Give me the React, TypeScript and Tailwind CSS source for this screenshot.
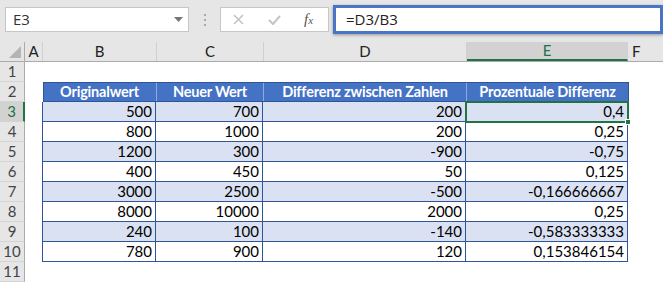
import React from 'react';

const cols = [
  { key: 'A', w: 'w-[18px]' },
  { key: 'B', w: 'w-[114px]' },
  { key: 'C', w: 'w-[107px]' },
  { key: 'D', w: 'w-[203px]' },
  { key: 'E', w: 'w-[161px]' },
];

const data: [string, string, string, string][] = [
  ['500', '700', '200', '0,4'],
  ['800', '1000', '200', '0,25'],
  ['1200', '300', '-900', '-0,75'],
  ['400', '450', '50', '0,125'],
  ['3000', '2500', '-500', '-0,166666667'],
  ['8000', '10000', '2000', '0,25'],
  ['240', '100', '-140', '-0,583333333'],
  ['780', '900', '120', '0,153846154'],
];

const headers = ['Originalwert', 'Neuer Wert', 'Differenz zwischen Zahlen', 'Prozentuale Differenz'];
const widths = ['w-[114px]', 'w-[107px]', 'w-[203px]', 'w-[161px]'];

const RowHead: React.FC<{ n: number; active?: boolean }> = ({ n, active }) => (
  <div
    className={`w-[25px] h-[20px] shrink-0 flex items-center justify-center text-[15px] border-b border-[#d4d4d4] ${
      active ? 'bg-[#d2d2d2] text-[#217346] border-r-2 border-r-[#217346]' : 'bg-[#e6e6e6] text-[#444] border-r border-r-[#ababab]'
    }`}
  >
    {n}
  </div>
);

export default function App() {
  return (
    <div className="w-[663px] h-[283px] overflow-hidden bg-white font-['Lato',sans-serif] text-[15px] text-black">
      {/* formula bar */}
      <div className="h-[42px] bg-[#e6e6e6] flex items-start">
        <div className="ml-[5px] mt-[7px] w-[184px] h-[25px] bg-white border border-[#c6c6c6] flex items-center justify-between pl-[7px] pr-[5px]">
          <span className="text-[15px] text-[#333] font-['Open_Sans',sans-serif]">E3</span>
          <svg width="9" height="5" viewBox="0 0 9 5"><path d="M0 0h9L4.5 5z" fill="#777" /></svg>
        </div>
        <div className="w-[31px] h-[42px] flex flex-col items-center justify-center gap-[3px] pb-[2px]">
          <span className="w-[2px] h-[2px] bg-[#aaa]" />
          <span className="w-[2px] h-[2px] bg-[#aaa]" />
          <span className="w-[2px] h-[2px] bg-[#aaa]" />
        </div>
        <div className="mt-[7px] w-[109px] h-[25px] bg-white border border-[#c6c6c6] flex items-center">
          <svg className="ml-[12px]" width="11" height="11" viewBox="0 0 11 11"><path d="M1 1l9 9M10 1l-9 9" stroke="#c4c4c4" strokeWidth="1.6" /></svg>
          <svg className="ml-[24px]" width="13" height="10" viewBox="0 0 13 10"><path d="M1 5l4 4 7-8" stroke="#c4c4c4" strokeWidth="2" fill="none" /></svg>
          <span className="ml-[23px] font-['Liberation_Serif',serif] italic text-[15px] text-[#555] leading-none">
            f<span className="text-[11px]">x</span>
          </span>
        </div>
        <div className="ml-[4px] mt-[5px] w-[330px] h-[29px] bg-white border-[3px] border-[#4a74c4] shadow-[0_1px_3px_rgba(0,0,0,0.35)] flex items-center pl-[10px]">
          <span className="text-[15px] text-[#222] font-['Open_Sans',sans-serif]">=D3/B3</span>
        </div>
      </div>

      {/* column headers */}
      <div className="flex h-[20px] bg-[#e6e6e6] border-b border-[#ababab]">
        <div className="w-[25px] shrink-0 border-r border-[#ababab] relative">
          <svg className="absolute right-[3px] bottom-[3px]" width="12" height="12" viewBox="0 0 12 12"><path d="M12 0v12H0z" fill="#b4b4b4" /></svg>
        </div>
        {cols.map((c) => (
          <div
            key={c.key}
            className={`${c.w} shrink-0 flex items-center justify-center border-r border-[#d0d0d0] ${
              c.key === 'E' ? 'bg-[#d2d2d2] text-[#217346] border-b-2 border-b-[#217346]' : 'text-[#222]'
            }`}
          >
            {c.key}
          </div>
        ))}
        <div className="flex-1 pl-[4px] flex items-center text-[#222]">F</div>
      </div>

      {/* row 1 */}
      <div className="flex">
        <RowHead n={1} />
      </div>

      {/* row 2: header */}
      <div className="flex">
        <RowHead n={2} />
        <div className="w-[18px] shrink-0" />
        <div className="flex bg-[#4472c4] border border-[#2f5597] h-[20px] -mb-px">
          {headers.map((h, i) => (
            <div
              key={h}
              className={`${widths[i]} ${i === 0 ? '-ml-px' : ''} shrink-0 flex items-center justify-center text-white font-bold text-[14.5px] tracking-[-0.2px] border-r border-[#8eaadb] last:border-r-0`}
            >
              {h}
            </div>
          ))}
        </div>
      </div>

      {data.map((r, ri) => (
        <div key={ri} className="flex">
          <RowHead n={ri + 3} active={ri === 0} />
          <div className="w-[18px] shrink-0" />
          <div className={`flex h-[20px] border-x border-b border-[#2f5597] ${ri % 2 === 0 ? 'bg-[#d9e1f2]' : 'bg-white'} -ml-px`}>
            {r.map((v, ci) => (
              <div
                key={ci}
                className={`${widths[ci]} shrink-0 flex items-center justify-end pr-[3px] border-r border-[#2f5597] last:border-r-0 relative ${
                  ci === 0 ? '-ml-px' : ''
                }`}
              >
                {v}
                {ri === 0 && ci === 3 && (
                  <>
                    <div className="absolute -left-[1px] -top-[1px] -right-[2px] -bottom-[2px] border-2 border-[#217346]" />
                    <div className="absolute -right-[4px] -bottom-[4px] w-[6px] h-[6px] bg-[#217346] border border-white" />
                  </>
                )}
              </div>
            ))}
          </div>
        </div>
      ))}

      <div className="flex">
        <RowHead n={11} />
      </div>
    </div>
  );
}
